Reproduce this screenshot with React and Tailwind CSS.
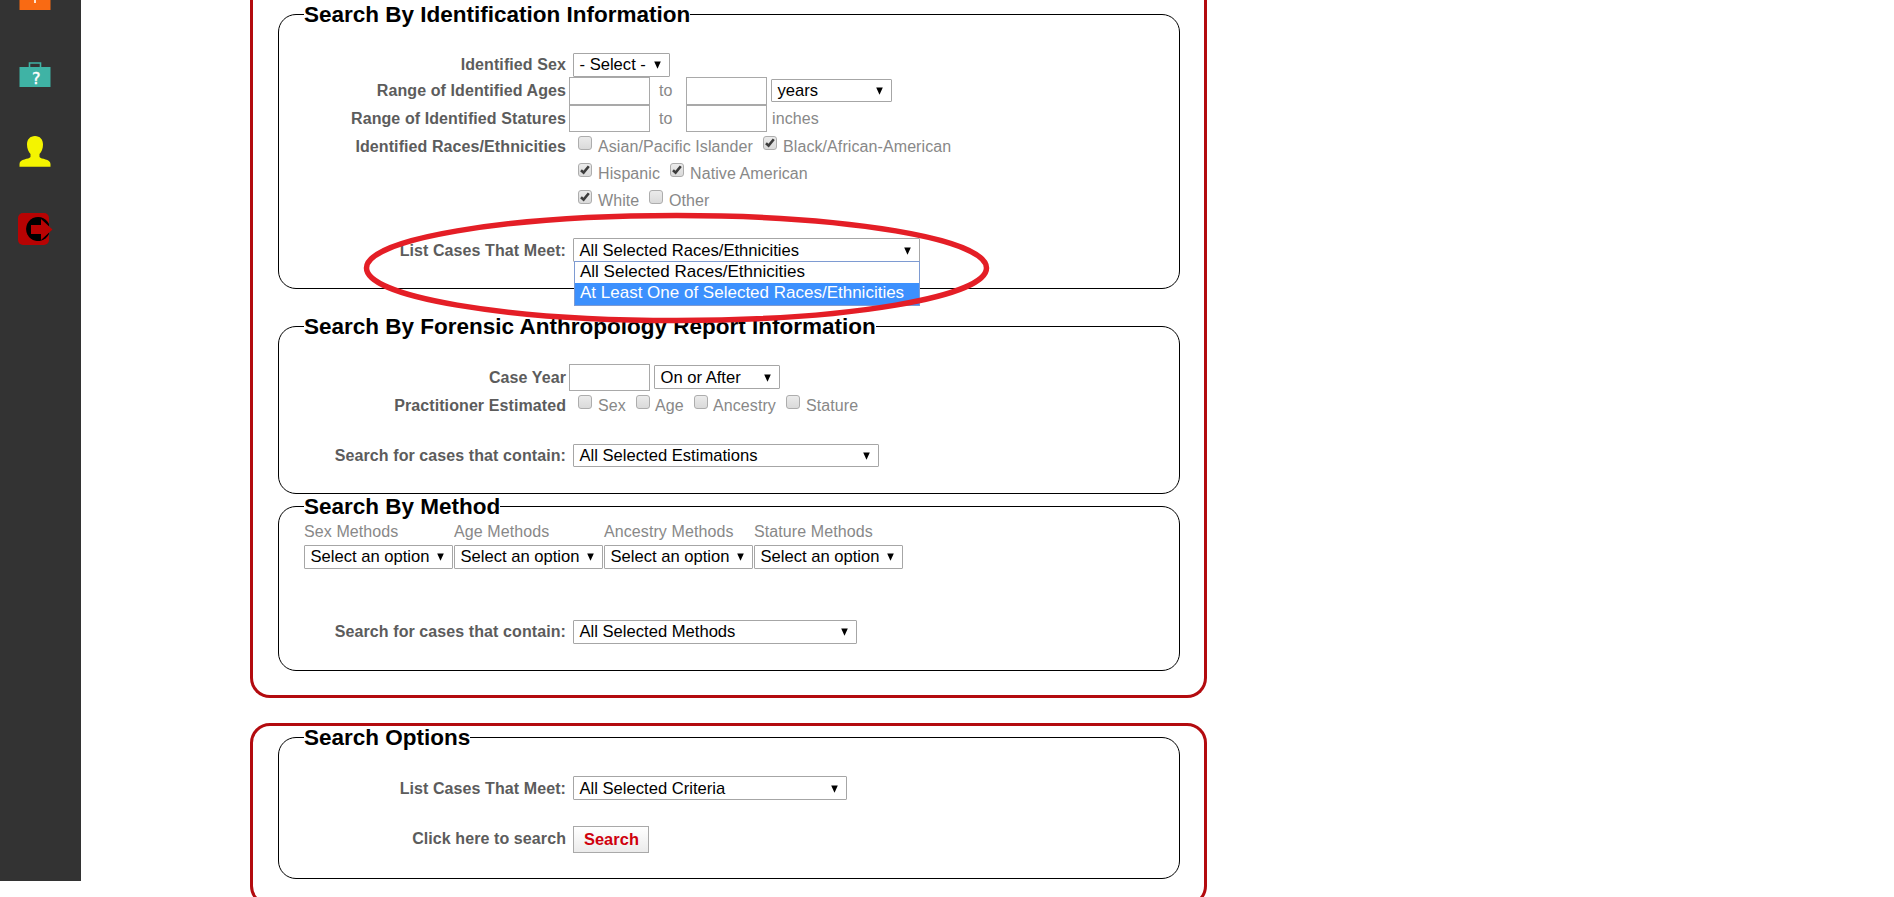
import React from "react";

function Arrow() {
  return (
    <svg className="mr-[8px] h-2 w-[7px] shrink-0" viewBox="0 0 7 8">
      <path d="M0.2 0.5H6.800L3.5 7.800Z" fill="#000" />
    </svg>
  );
}

function Select({ children, className = "" }) {
  return (
    <div
      className={`flex shrink-0 items-center justify-between rounded-[1px] border border-[#a6a6a6] bg-white pl-[5.5px] text-[16.6px] tracking-normal whitespace-nowrap text-black ${className}`}
    >
      <span className="leading-5">{children}</span>
      <Arrow />
    </div>
  );
}

function Input({ className = "" }) {
  return <div className={`-mt-0.5 w-[81px] shrink-0 border border-[#a9a9a9] bg-white ${className}`} />;
}

function Check({ label, checked, className = "", labelClass = "" }) {
  return (
    <div className={`flex shrink-0 items-start ${className}`}>
      <div className="mt-px mr-[6px] h-3.5 w-3.5 rounded-[3px] border border-[#adadad] bg-linear-to-b from-[#ebebeb] to-[#dadada]">
        {checked && (
          <svg className="h-3 w-3" viewBox="0 0 12 12" fill="none">
            <path d="M2 6.2L4.6 8.6L9.8 2.2" stroke="#3c3c3c" strokeWidth="2.6" />
          </svg>
        )}
      </div>
      <span className={labelClass}>{label}</span>
    </div>
  );
}

function Row({ label, className = "", children }) {
  return (
    <div className={`flex items-start leading-6 whitespace-nowrap ${className}`}>
      <div className="mr-[7px] w-[287px] shrink-0 text-right font-bold text-[#5c5c5c]">{label}</div>
      {children}
    </div>
  );
}

function Group({ title, className = "", children }) {
  return (
    <section className={`flex w-[902px] flex-col rounded-[18px] border border-black ${className}`}>
      <h2 className="-mt-[11px] mb-[2px] ml-[25px] h-[22px] w-fit shrink-0 bg-white text-[22.5px] leading-[22px] font-bold tracking-normal whitespace-nowrap text-black">
        {title}
      </h2>
      {children}
    </section>
  );
}

function Sidebar() {
  return (
    <aside className="h-[881px] w-[81px] shrink-0 bg-[#333333]">
      <svg className="h-[260px] w-[81px]" viewBox="0 0 81 260">
        <rect x="19.5" y="-10" width="31" height="20" fill="#f96a13" />
        <rect x="34" y="0" width="2" height="3" fill="#ffe3d0" />
        <path d="M29.500 67V63H40.500V67" fill="none" stroke="#3fb3a5" strokeWidth="1.6" />
        <rect x="19.5" y="67" width="31" height="20" fill="#3fb3a5" />
        <text x="36" y="83.5" textAnchor="middle" fontFamily="DejaVu Sans Mono" fontSize="16" fill="#fff" stroke="#fff" strokeWidth="0.4">
          ?
        </text>
        <path
          d="M35 136C40 136 43 139.500 43 144.500C43 148.500 41.500 152 39.500 154V157C41 159.500 50.500 158.500 50.500 164V166.700H19.500V164C19.500 158.500 29 159.500 30.500 157V154C28.500 152 27 148.500 27 144.500C27 139.500 30 136 35 136Z"
          fill="#f4f400"
        />
        <rect x="18" y="213" width="31" height="32" rx="5" fill="#b80303" />
        <path d="M49 224V234A12 12 0 1 1 49 224Z" fill="#000" />
        <path d="M31 225H41V219L52.500 229.500L41 240V234H31Z" fill="#b80303" />
      </svg>
    </aside>
  );
}

const METHODS = ["Sex Methods", "Age Methods", "Ancestry Methods", "Stature Methods"];

export default function App() {
  return (
    <div className="relative flex h-[897px] w-[1894px] overflow-hidden bg-white font-['Liberation_Sans',Arial,sans-serif] text-base tracking-[0.09px] text-[#888888]">
      <Sidebar />
      <main className="ml-[169px] w-[957px] shrink-0">
        <div className="h-[698px] rounded-b-[20px] border-3 border-t-0 border-[#b30b0f] pt-[14px] pl-[25px]">
          <Group title="Search By Identification Information" className="h-[275px]">
            <Row label="Identified Sex" className="mt-[25px] h-[26px]">
              <Select className="h-6 w-[97px]">- Select -</Select>
            </Row>
            <Row label="Range of Identified Ages" className="h-7">
              <Input className="-ml-1 h-7" />
              <span className="w-9 pl-[9px]">to</span>
              <Input className="h-7" />
              <Select className="ml-1 h-[23px] w-[121px]">years</Select>
            </Row>
            <Row label="Range of Identified Statures" className="h-7">
              <Input className="-ml-1 h-[27px]" />
              <span className="w-9 pl-[9px]">to</span>
              <Input className="h-[27px]" />
              <span className="ml-[5px]">inches</span>
            </Row>
            <Row label="Identified Races/Ethnicities" className="h-[27px]">
              <Check label="Asian/Pacific Islander" className="ml-[5px] w-[185px]" />
              <Check label="Black/African-American" checked />
            </Row>
            <Row className="h-[27px]">
              <Check label="Hispanic" checked className="ml-[5px] w-[92px]" />
              <Check label="Native American" checked />
            </Row>
            <Row className="h-[50px]">
              <Check label="White" checked className="ml-[5px] w-[71px]" />
              <Check label="Other" />
            </Row>
            <Row label="List Cases That Meet:">
              <div className="relative -mt-px">
                <Select className="h-6 w-[347px] pt-0.5">All Selected Races/Ethnicities</Select>
                <div className="absolute top-[23px] left-px z-10 h-[45px] w-[346px] border border-[#7e9bd2] bg-white text-[17px] tracking-normal text-black">
                  <div className="h-[21px] pl-[5px] leading-5">All Selected Races/Ethnicities</div>
                  <div className="h-[22px] bg-[#3c90fd] pl-[5px] leading-5 text-white">At Least One of Selected Races/Ethnicities</div>
                </div>
              </div>
            </Row>
          </Group>
          <Group title="Search By Forensic Anthropology Report Information" className="mt-[37px] h-[168px]">
            <Row label="Case Year" className="mt-[26px] h-7">
              <Input className="-ml-1 h-[27px]" />
              <Select className="-mt-px ml-1 h-6 w-[126px] pt-0.5">On or After</Select>
            </Row>
            <Row label="Practitioner Estimated" className="h-[50px]">
              <Check label="Sex" className="ml-[5px] w-[58px]" />
              <Check label="Age" className="w-[58px]" labelClass="-ml-px" />
              <Check label="Ancestry" className="w-[92px]" labelClass="-ml-px" />
              <Check label="Stature" />
            </Row>
            <Row label="Search for cases that contain:">
              <Select className="h-[23px] w-[306px]">All Selected Estimations</Select>
            </Row>
          </Group>
          <Group title="Search By Method" className="mt-[12px] h-[165px]">
            <div className="ml-[25px] flex h-[100px] shrink-0 gap-px">
              {METHODS.map((m) => (
                <div key={m} className="w-[149px] leading-6 whitespace-nowrap">
                  <div className="h-[25px]">{m}</div>
                  <Select className="h-6 w-[149px]">Select an option</Select>
                </div>
              ))}
            </div>
            <Row label="Search for cases that contain:">
              <Select className="h-6 w-[284px]">All Selected Methods</Select>
            </Row>
          </Group>
        </div>
        <div className="mt-[25px] h-[183px] rounded-[20px] border-3 border-[#b30b0f] pt-[11px] pl-[25px]">
          <Group title="Search Options" className="h-[142px]">
            <Row label="List Cases That Meet:" className="mt-[26px] h-[50px]">
              <Select className="-mt-px h-6 w-[274px] pt-0.5">All Selected Criteria</Select>
            </Row>
            <Row label="Click here to search">
              <button className="-mt-px flex h-[27px] w-[76px] items-start justify-center border border-[#a9a9a9] bg-linear-to-b from-white to-[#ebebeb] pl-px text-[16.4px] leading-6 font-bold text-[#cf000d]">
                Search
              </button>
            </Row>
          </Group>
        </div>
      </main>
      <svg className="pointer-events-none absolute top-[210px] left-[360px] z-20 h-[116px] w-[634px]" viewBox="0 0 634 116">
        <ellipse cx="316.500" cy="58" rx="310" ry="52.500" fill="none" stroke="#e41e26" strokeWidth="5.5" />
      </svg>
    </div>
  );
}
